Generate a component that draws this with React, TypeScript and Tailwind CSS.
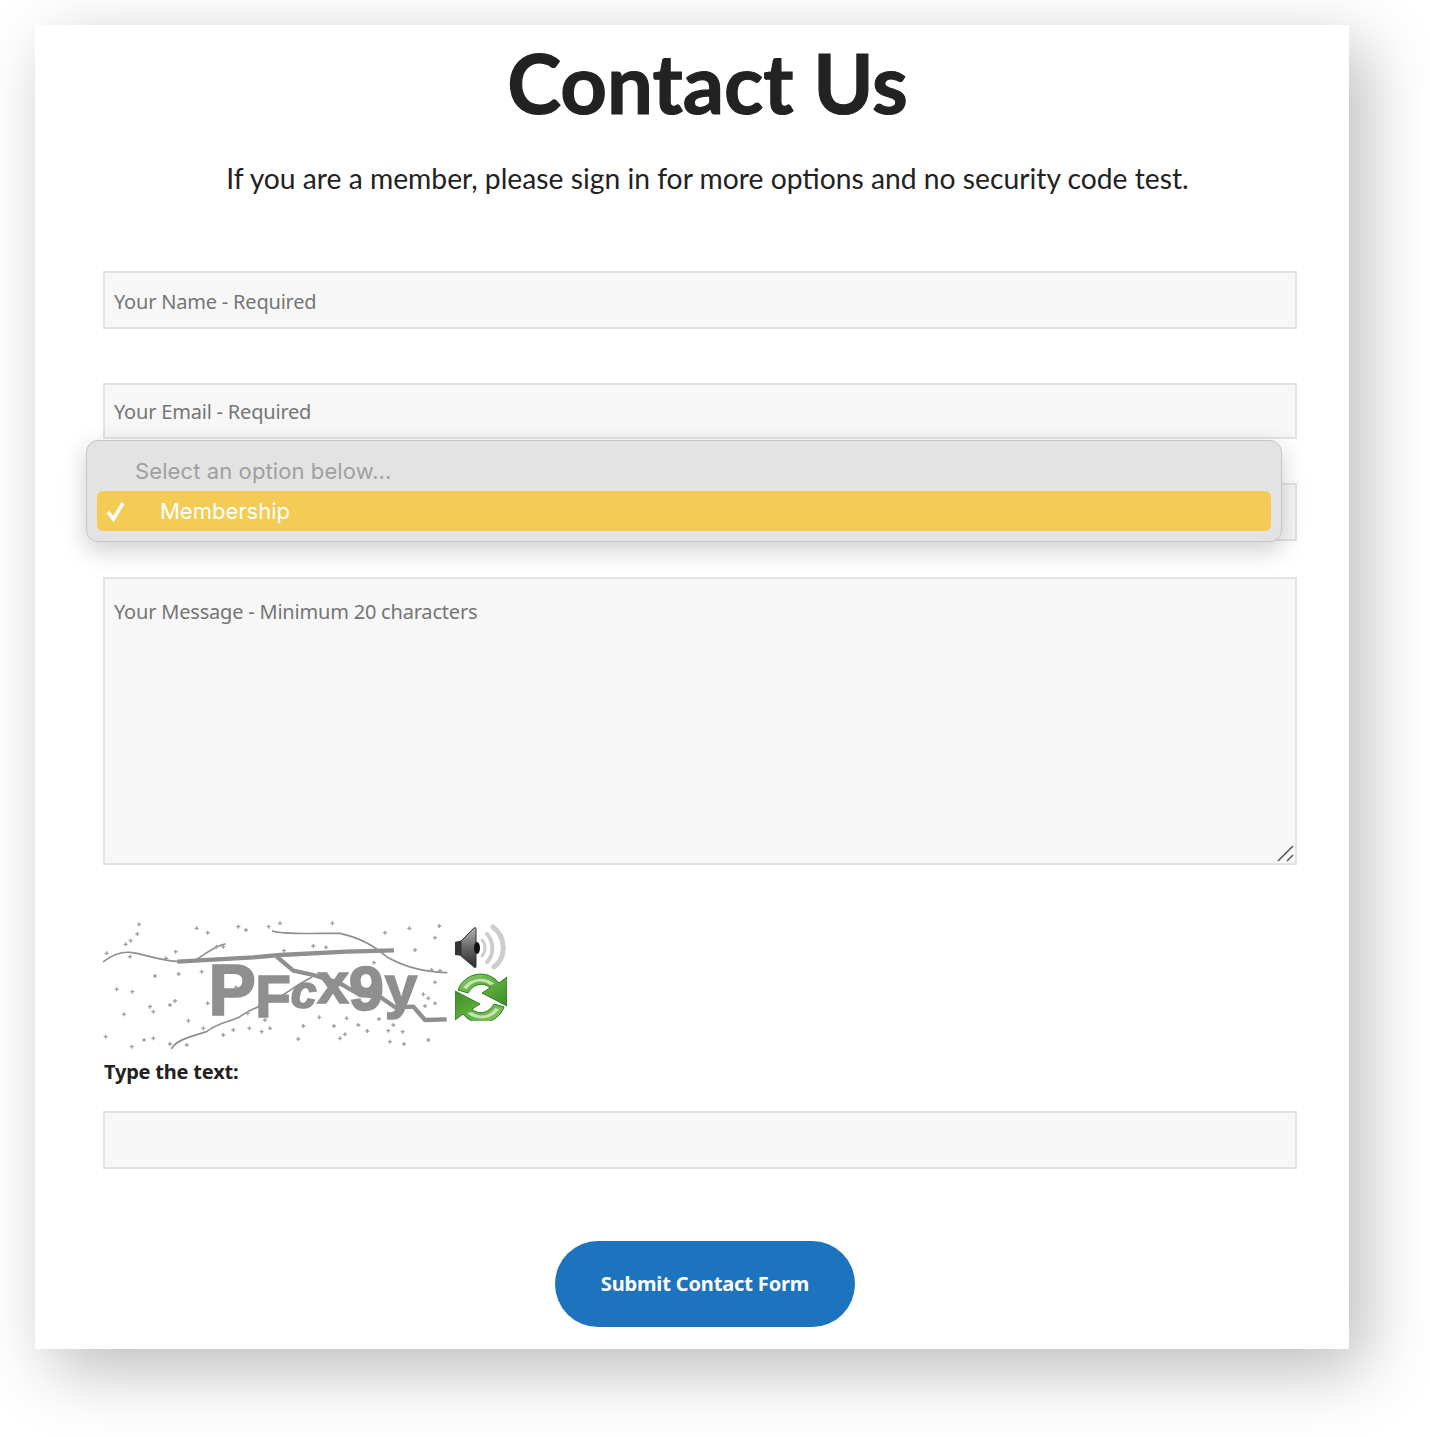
import React from "react";

const specks: [number, number][] = [
  [177,73],[172,102],[152,122],[137,133],[80,160],[150,170],[287,155],[258,175],[430,140],[410,140],[566,80],[498,90],[350,85],[383,98],[475,80],[600,70],[757,70],[915,98],[988,85],[1065,113],[1078,78],[1005,150],[700,138],[738,142],[612,152],[882,188],[1080,212],[1055,210],[365,215],[296,222],[225,228],[110,268],[157,275],[210,320],[285,303],[270,315],[220,335],[132,343],[383,310],[468,262],[1030,283],[1045,295],[1065,310],[1035,318],[1065,247],[503,340],[555,360],[718,352],[800,355],[897,357],[940,375],[670,378],[570,385],[545,395],[508,385],[460,390],[430,405],[370,385],[325,362],[77,410],[192,420],[220,415],[155,440],[320,435],[270,432],[655,417],[780,415],[795,403],[862,393],[925,392],[968,395],[930,425],[972,432],[1045,420],[762,378],[835,375],
];

function Captcha() {
  const g = "#8f8f8f";
  return (
    <svg width="345" height="130" viewBox="69 60 1035 390" className="block shrink-0 blur-[0.4px]">
      <text
        fill={g}
        stroke={g}
        strokeWidth="5"
        className="font-['Liberation_Sans',sans-serif] font-bold"
      >
        <tspan x="385" y="345" fontSize="215">P</tspan>
        <tspan x="526" y="350" fontSize="175">F</tspan>
        <tspan x="632" y="325" fontSize="140" fontStyle="italic">c</tspan>
        <tspan x="712" y="310" fontSize="170">x</tspan>
        <tspan x="806" y="330" fontSize="190">9</tspan>
        <tspan x="914" y="322" fontSize="175">y</tspan>
      </text>
      <g fill="none" stroke={g} strokeLinecap="round" strokeLinejoin="round">
        <path strokeWidth="5" d="M70 185C90 170 120 155 150 157C190 160 230 182 300 185" />
        <path strokeWidth="5" d="M350 178C380 160 400 140 435 132" />
        <path strokeWidth="5" d="M578 93C600 104 700 100 780 100C850 115 890 145 920 170C970 200 1030 215 1100 218" />
        <path strokeWidth="13" strokeLinecap="butt" d="M292 185L520 172L600 165L800 155L942 151" />
        <path strokeWidth="13" strokeLinecap="butt" d="M590 170L640 212L700 225L780 250L840 285L900 290L945 322L1000 320L1035 360L1100 358" />
        <path strokeWidth="5" d="M275 445C290 420 330 410 380 395C410 370 450 365 480 350C520 320 560 315 600 290C640 265 660 250 695 232" />
      </g>
      <g stroke="#a0a0a0" strokeWidth="4">
        {specks.map(([x, y], i) => (
          <path key={i} d={`M${x - 6} ${y}H${x + 6}M${x} ${y - 6}V${y + 6}`} />
        ))}
      </g>
    </svg>
  );
}

function SpeakerIcon() {
  return (
    <svg width="52" height="46" viewBox="0 0 52 46" className="block">
      <defs>
        <linearGradient id="cone" x1="0" y1="0" x2="0" y2="1">
          <stop offset="0" stopColor="#b5b5b5" />
          <stop offset="0.5" stopColor="#666" />
          <stop offset="1" stopColor="#2b2b2b" />
        </linearGradient>
      </defs>
      <g fill="none" stroke="#cdcdcd" strokeLinecap="round">
        <path strokeWidth="3" d="M27 16C31 20 31 28 27 32" />
        <path strokeWidth="4" d="M32 10C39 18 39 31 32 38" />
        <path strokeWidth="5" d="M38 3C51 13 52 33 39 43" />
      </g>
      <path fill="#333" d="M0 18L8 16V32L0 31Z" />
      <path fill="url(#cone)" stroke="#333" strokeWidth="1" d="M6 17L19 4C21 3 21 4 21 6V42C21 44 20 44 19 43L6 32Z" />
      <ellipse cx="22" cy="24" rx="3" ry="6" fill="#111" />
    </svg>
  );
}

function RefreshIcon() {
  const arrow = "M52 4V33L27 20L35 15C29 9 19 10 13 20L3 17C9 0 32 -5 44 10Z";
  const shine = "M8 15C14 5 30 2 40 11L35 12C27 6 17 8 12 16Z";
  return (
    <svg width="52" height="48" viewBox="0 0 52 48" className="block">
      <defs>
        <linearGradient id="grn" x1="0" y1="0" x2="1" y2="1">
          <stop offset="0" stopColor="#8ccb6c" />
          <stop offset="0.5" stopColor="#5eae3e" />
          <stop offset="1" stopColor="#3c8c2a" />
        </linearGradient>
      </defs>
      <path d={arrow} fill="url(#grn)" stroke="#2f7d23" strokeWidth="1" />
      <path d={shine} fill="#d8efcc" opacity="0.8" />
      <g transform="rotate(180 26 25.5)">
        <path d={arrow} fill="url(#grn)" stroke="#2f7d23" strokeWidth="1" />
        <path d={shine} fill="#d8efcc" opacity="0.8" />
      </g>
    </svg>
  );
}

const field =
  "block w-full bg-[#f7f7f7] border-2 border-[#e3e3e3] pl-[9px] pr-[10px] text-[20px] text-[#333] outline-none placeholder:text-[#757575] font-['Noto_Sans',sans-serif] tracking-[-0.2px]";

export default function App() {
  return (
    <div className="w-[1430px] h-[1437px] bg-white pl-[35px] pt-[25px] font-['Lato',sans-serif]">
      <div className="w-[1314px] h-[1324px] bg-white shadow-[16px_20px_64px_rgba(0,0,0,0.27)] pl-[68px] pr-[52px] text-[#222]">
        <div className="-mr-[15px] text-center">
          <h1 className="font-['Lato',sans-serif] font-bold text-[81.4px] leading-[100px] pt-[8px] [-webkit-text-stroke:1.2px_#222]">Contact Us</h1>
          <p className="font-['Lato',sans-serif] text-[28.25px] leading-[36px] mt-[27px]">
            If you are a member, please sign in for more options and no security code test.
          </p>
        </div>

        <input className={`${field} h-[58px] mt-[75px] pt-[2px]`} placeholder="Your Name - Required" />
        <input className={`${field} h-[56px] mt-[54px]`} placeholder="Your Email - Required" />

        <div className="relative h-[58px] mt-[44px] bg-[#f7f7f7] border-2 border-[#e3e3e3]">
          <div className="absolute left-[-19px] top-[-45px] w-[1196px] h-[102px] rounded-[12px] bg-[#e3e3e3] border border-[#c6c6c6] shadow-[0_8px_26px_rgba(0,0,0,0.2)] px-[10px] font-['Inter',sans-serif] text-[22px]">
            <div className="h-[50px] pl-[38px] pt-[15px] leading-[30px] text-[#a0a0a0] tracking-[0.1px]">Select an option below...</div>
            <div className="h-[40px] rounded-[6px] bg-[#f3cb55] text-white flex items-center">
              <svg width="22" height="22" viewBox="0 0 22 22" className="ml-[8px] shrink-0">
                <path d="M3 12L8.5 19L18 3" fill="none" stroke="#fff" strokeWidth="3.6" />
              </svg>
              <span className="ml-[33px]">Membership</span>
            </div>
          </div>
        </div>

        <div className="relative mt-[36px]">
          <textarea className={`${field} h-[288px] pt-[18px] resize-none`} placeholder="Your Message - Minimum 20 characters" />
          <svg width="18" height="18" viewBox="0 0 18 18" className="absolute right-[2px] bottom-[2px]">
            <path d="M1 16L16 1M10 16L16 10" stroke="#555" strokeWidth="1.5" />
          </svg>
        </div>

        <div className="flex mt-[55px] gap-[7px]">
          <Captcha />
          <div className="flex flex-col pt-[4px] gap-[3px]">
            <SpeakerIcon />
            <RefreshIcon />
          </div>
        </div>

        <div className="font-['Noto_Sans',sans-serif] font-bold text-[20px] tracking-[-0.2px] leading-[28px] mt-[8px] pl-px">Type the text:</div>

        <input className={`${field} h-[58px] mt-[25px]`} />

        <div className="flex justify-center mt-[72px]">
          <button className="w-[300px] h-[86px] ml-[10px] rounded-[43px] bg-[#1e73be] text-white font-['Noto_Sans',sans-serif] font-bold text-[20px] tracking-[-0.14px]">
            Submit Contact Form
          </button>
        </div>
      </div>
    </div>
  );
}
